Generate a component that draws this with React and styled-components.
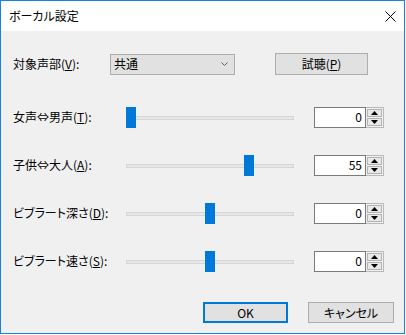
import React from "react";
import styled, { createGlobalStyle } from "styled-components";

const GlobalStyle = createGlobalStyle`
  html, body { margin: 0; padding: 0; background: #ffffff; }
  body {
    font-family: "Noto Sans CJK JP", "Noto Sans", sans-serif;
    font-size: 12px;
    color: #000;
    font-feature-settings: "palt";
  }
  * { box-sizing: border-box; }
`;

const Window = styled.div`
  width: 405px;
  height: 334px;
  border: 1px solid #1883d7;
  background: #f0f0f0;
  display: flex;
  flex-direction: column;
`;

const TitleBar = styled.div`
  height: 30px;
  background: #ffffff;
  display: flex;
  align-items: center;
  justify-content: space-between;
  padding-left: 8px;
  padding-right: 8px;
  font-size: 12px;
  line-height: 1;
`;

const Content = styled.div`
  flex: 1;
  display: flex;
  flex-direction: column;
  padding: 22px 10px 0 12px;
`;

const TopRow = styled.div`
  display: flex;
  align-items: center;
  height: 22px;
`;

const Label = styled.span`
  width: ${(p) => (p.$w ? `${p.$w}px` : "auto")};
  flex: none;
  white-space: nowrap;
  line-height: 1;
`;

const Combo = styled.div`
  width: 125px;
  height: 21px;
  border: 1px solid #adadad;
  background: #e1e1e1;
  display: flex;
  align-items: center;
  justify-content: space-between;
  padding: 0 6px 0 3px;
  line-height: 1;
`;

const Button = styled.div`
  width: ${(p) => p.$w}px;
  height: ${(p) => p.$h}px;
  border: ${(p) => (p.$default ? "2px solid #0078d7" : "1px solid #adadad")};
  background: #e1e1e1;
  display: flex;
  align-items: center;
  justify-content: center;
  line-height: 1;
  margin-left: ${(p) => p.$ml || 0}px;
`;

const SliderGrid = styled.div`
  margin-top: 31px;
  display: grid;
  grid-template-columns: 113px 168px 90px;
  column-gap: 0;
  row-gap: 26px;
  grid-auto-rows: 22px;
  align-items: center;
`;

const Slider = styled.div`
  position: relative;
  height: 22px;
`;

const Track = styled.div`
  position: absolute;
  left: 0;
  right: 0;
  top: 10px;
  height: 4px;
  border: 1px solid #d6d6d6;
  background: #e7e7e7;
`;

const Thumb = styled.div`
  position: absolute;
  top: 1px;
  width: 10px;
  height: 21px;
  background: #0078d7;
`;

const Spin = styled.div`
  display: flex;
  height: 21px;
  margin-left: 20px;
  width: 70px;
`;

const Edit = styled.div`
  width: 52px;
  flex: none;
  height: 21px;
  border: 1px solid #7a7a7a;
  background: #ffffff;
  display: flex;
  align-items: center;
  justify-content: flex-end;
  padding-right: 3px;
  line-height: 1;
`;

const SpinButtons = styled.div`
  width: 18px;
  flex: none;
  display: flex;
  flex-direction: column;
  border: 1px solid #b9b9b9;
  border-left: none;
  background: #f0f0f0;
  padding: 1px;
  gap: 1px;
`;

const SpinBtn = styled.div`
  flex: 1;
  border: 1px solid #b4b4b4;
  background: #e8e8e8;
  display: flex;
  align-items: center;
  justify-content: center;
`;

const Footer = styled.div`
  margin-top: 30px;
  display: flex;
  justify-content: flex-end;
  gap: 20px;
`;

const Tri = ({ up }) => (
  <svg width="7" height="4" viewBox="0 0 7 4">
    {up ? <polygon points="0,4 7,4 3.5,0" fill="#000" /> : <polygon points="0,0 7,0 3.5,4" fill="#000" />}
  </svg>
);

const SpinBox = ({ value }) => (
  <Spin>
    <Edit>{value}</Edit>
    <SpinButtons>
      <SpinBtn><Tri up /></SpinBtn>
      <SpinBtn><Tri /></SpinBtn>
    </SpinButtons>
  </Spin>
);

const rows = [
  { pre: "女声⇔男声(", key: "T", pos: 0, value: 0 },
  { pre: "子供⇔大人(", key: "A", pos: 118, value: 55 },
  { pre: "ビブラート深さ(", key: "D", pos: 79, value: 0 },
  { pre: "ビブラート速さ(", key: "S", pos: 79, value: 0 },
];

export default function App() {
  return (
    <>
      <GlobalStyle />
      <Window>
        <TitleBar>
          <span>ボーカル設定</span>
          <svg width="11" height="11" viewBox="0 0 11 11">
            <path d="M0.5 0.5 L10.5 10.5 M10.5 0.5 L0.5 10.5" stroke="#000" strokeWidth="1" />
          </svg>
        </TitleBar>
        <Content>
          <TopRow>
            <Label $w={97}>対象声部(<u>V</u>):</Label>
            <Combo>
              <span>共通</span>
              <svg width="7" height="4" viewBox="0 0 7 4">
                <path d="M0.5 0.5 L3.5 3.5 L6.5 0.5" stroke="#606060" fill="none" strokeWidth="1" />
              </svg>
            </Combo>
            <Button $w={93} $h={22} $ml={40}>試聴(<u>P</u>)</Button>
          </TopRow>
          <SliderGrid>
            {rows.map((r) => (
              <React.Fragment key={r.key}>
                <Label>{r.pre}<u>{r.key}</u>):</Label>
                <Slider>
                  <Track />
                  <Thumb style={{ left: r.pos }} />
                </Slider>
                <SpinBox value={r.value} />
              </React.Fragment>
            ))}
          </SliderGrid>
          <Footer>
            <Button $w={85} $h={21} $default>OK</Button>
            <Button $w={86} $h={21}>キャンセル</Button>
          </Footer>
        </Content>
      </Window>
    </>
  );
}
